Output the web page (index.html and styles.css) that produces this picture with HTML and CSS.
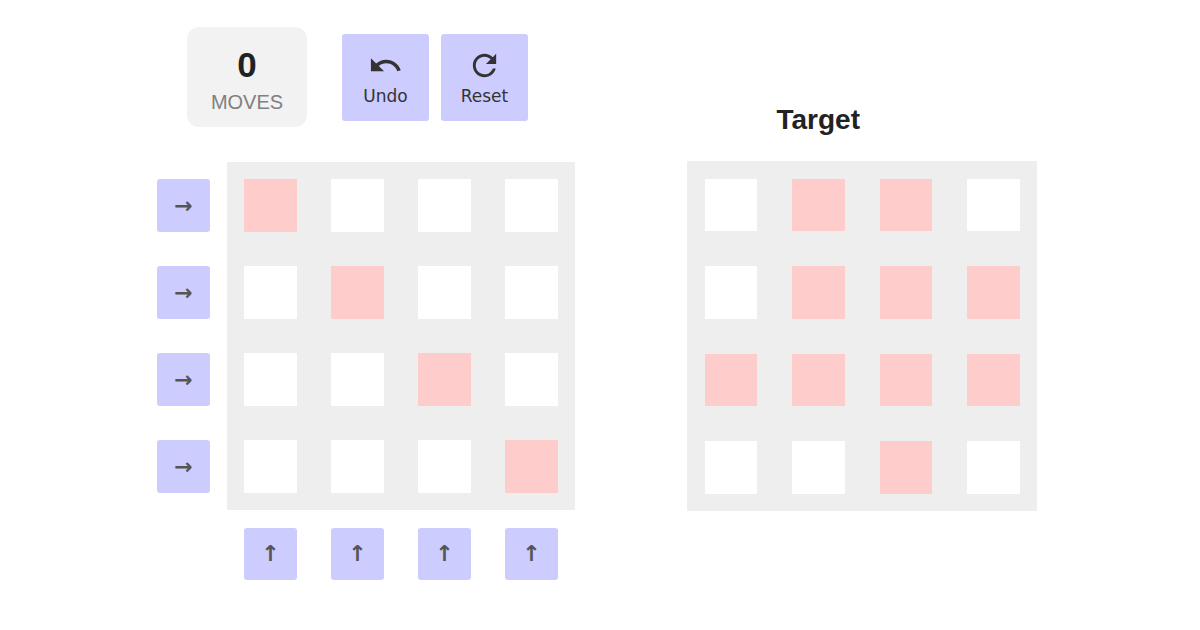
FILE: index.html
```html
<!DOCTYPE html>
<html lang="en">
<head>
<meta charset="utf-8">
<meta name="viewport" content="width=device-width, initial-scale=1">
<title>Grid puzzle</title>
<link rel="stylesheet" href="styles.css">
</head>
<body>
<main class="game">
  <section class="play">
    <div class="toolbar">
      <div class="moves">
        <span class="moves-count">0</span>
        <span class="moves-label">MOVES</span>
      </div>
      <div class="actions">
        <button class="action" type="button">
          <svg class="icon" viewBox="0 0 24 24" aria-hidden="true"><path d="M12.5 8c-2.65 0-5.05.99-6.9 2.6L2 7v9h9l-3.62-3.62c1.39-1.16 3.16-1.88 5.12-1.88 3.54 0 6.55 2.31 7.6 5.5l2.37-.78C21.08 11.03 17.15 8 12.5 8z"/></svg>
          Undo
        </button>
        <button class="action" type="button">
          <svg class="icon" viewBox="0 0 24 24" aria-hidden="true"><path d="M17.65 6.35C16.2 4.9 14.21 4 12 4c-4.42 0-7.99 3.58-7.99 8s3.57 8 7.99 8c3.73 0 6.84-2.55 7.73-6h-2.08c-.82 2.33-3.04 4-5.65 4-3.31 0-6-2.69-6-6s2.69-6 6-6c1.66 0 3.14.69 4.22 1.78L13 11h7V4l-2.35 2.35z"/></svg>
          Reset
        </button>
      </div>
    </div>
    <div class="field">
      <div class="rows">
        <button class="shift" type="button" aria-label="Shift row 1">→</button>
        <button class="shift" type="button" aria-label="Shift row 2">→</button>
        <button class="shift" type="button" aria-label="Shift row 3">→</button>
        <button class="shift" type="button" aria-label="Shift row 4">→</button>
      </div>
      <div class="board">
        <i class="cell on"></i><i class="cell"></i><i class="cell"></i><i class="cell"></i>
        <i class="cell"></i><i class="cell on"></i><i class="cell"></i><i class="cell"></i>
        <i class="cell"></i><i class="cell"></i><i class="cell on"></i><i class="cell"></i>
        <i class="cell"></i><i class="cell"></i><i class="cell"></i><i class="cell on"></i>
      </div>
      <div class="columns">
        <button class="shift" type="button" aria-label="Shift column 1">↑</button>
        <button class="shift" type="button" aria-label="Shift column 2">↑</button>
        <button class="shift" type="button" aria-label="Shift column 3">↑</button>
        <button class="shift" type="button" aria-label="Shift column 4">↑</button>
      </div>
    </div>
  </section>
  <section class="goal">
    <h2 class="goal-title">Target</h2>
    <div class="board">
      <i class="cell"></i><i class="cell on"></i><i class="cell on"></i><i class="cell"></i>
      <i class="cell"></i><i class="cell on"></i><i class="cell on"></i><i class="cell on"></i>
      <i class="cell on"></i><i class="cell on"></i><i class="cell on"></i><i class="cell on"></i>
      <i class="cell"></i><i class="cell"></i><i class="cell on"></i><i class="cell"></i>
    </div>
  </section>
</main>
</body>
</html>
```
FILE: styles.css
```css
* {
  box-sizing: border-box;
}

body {
  margin: 0;
  background: #fff;
  color: #222;
  font-family: "Liberation Sans", Arial, sans-serif;
}

.game {
  display: grid;
  grid-template-columns: 418fr 350fr;
  column-gap: 112px;
  max-width: 886px;
  margin: 0 auto;
  padding: 27px 6px 27px 0;
}

.toolbar {
  display: flex;
  align-items: center;
  gap: 35px;
  padding-left: 30px;
  margin-bottom: 35px;
}

.moves {
  display: flex;
  flex-direction: column;
  align-items: center;
  min-width: 120px;
  padding: 16px 20px 10px;
  border-radius: 12px;
  background: #f2f2f2;
}

.moves-count {
  font-size: 35px;
  line-height: 44px;
  font-weight: bold;
}

.moves-label {
  color: #808080;
  font-size: 20px;
  line-height: 30px;
}

.actions {
  display: flex;
  gap: 12px;
}

.action,
.shift {
  border: 0;
  border-radius: 3px;
  background: #ccf;
  font-family: "DejaVu Sans", sans-serif;
  cursor: pointer;
}

.action {
  display: flex;
  flex-direction: column;
  align-items: center;
  justify-content: center;
  width: 87px;
  height: 87px;
  padding: 3px 0 0;
  color: #333;
  font-size: 17px;
  line-height: 26px;
}

.icon {
  width: 35px;
  height: 35px;
  fill: #333;
}

.field {
  display: grid;
  grid-template-columns: 53px 1fr;
  gap: 18px 17px;
}

.rows {
  display: grid;
  grid-template-rows: repeat(4, 1fr);
  align-items: center;
}

.columns {
  display: grid;
  grid-column: 2;
  grid-template-columns: repeat(4, 1fr);
  justify-items: center;
}

.shift {
  padding: 0;
  color: #555;
  font-size: 22px;
  font-weight: bold;
  line-height: 26px;
}

.rows .shift {
  height: 60%;
}

.columns .shift {
  width: 60%;
  aspect-ratio: 1;
}

.board {
  display: grid;
  grid-template: repeat(4, 1fr) / repeat(4, 1fr);
  place-items: center;
  aspect-ratio: 1;
  background: #eee;
}

.cell {
  width: 60%;
  height: 60%;
  background: #fff;
}

.cell.on {
  background: #fcc;
}

.goal {
  padding-top: 77px;
}

.goal-title {
  width: 75%;
  margin: 0 0 25px;
  font-size: 28px;
  line-height: 32px;
  text-align: center;
}
```
